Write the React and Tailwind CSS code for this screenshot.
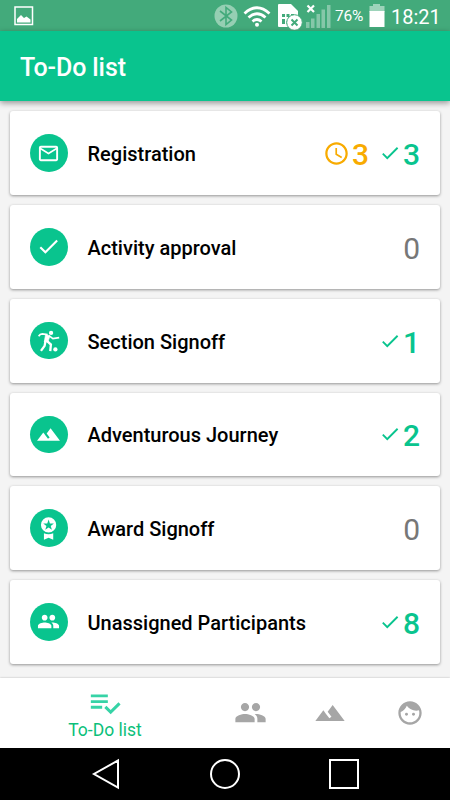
import React from 'react';
import { MdMailOutline, MdCheck, MdPeople, MdAccessTime } from 'react-icons/md';

function SoccerIcon() {
    return (
        <svg viewBox="0 0 113 113" className="w-[37.5px] h-[37.5px]" fill="none" stroke="currentColor">
            <circle cx="63.5" cy="33" r="6.5" fill="currentColor" stroke="none" />
            <circle cx="76.5" cy="82.5" r="6.5" fill="currentColor" stroke="none" />
            <path d="M26 43 Q30 36 37 36 L53 38" strokeWidth="5" />
            <path d="M57 41 L69 50 L88 47" strokeWidth="5" />
            <path d="M47 37 L60 42 L54 60 L43 60 Z" fill="currentColor" strokeWidth="2" />
            <path d="M47 56 L44 72 L33 87" strokeWidth="7" />
            <path d="M50 56 L63 68 L61 88" strokeWidth="7" />
        </svg>
    );
}

function AwardIcon() {
    return (
        <svg viewBox="0 0 113 113" className="w-[37.5px] h-[37.5px]" fill="currentColor">
            <path
                fillRule="evenodd"
                d="M56 25 A23 23 0 1 0 56 71 A23 23 0 1 0 56 25 Z M56 32 L60 43.5 L72 43.5 L62.5 51 L66 62.5 L56 55.5 L46 62.5 L49.5 51 L40 43.5 L52 43.5 Z"
            />
            <path d="M42 73 Q56 79 70 73 V93 L56 87 L42 93 Z" />
        </svg>
    );
}

function TerrainIcon({ size }) {
    return (
        <svg viewBox="0 0 24 24" width={size} height={size} fill="currentColor">
            <path d="M14 6l-3.750 5 2.850 3.800-1.600 1.200C9.810 13.750 7 10 7 10l-6 8h22L14 6z" />
        </svg>
    );
}

function FaceIcon({ size }) {
    return (
        <svg viewBox="0 0 24 24" width={size} height={size} fill="currentColor">
            <circle cx="9" cy="13" r="1.250" />
            <circle cx="15" cy="13" r="1.250" />
            <path d="M12 2C6.480 2 2 6.480 2 12s4.480 10 10 10 10-4.480 10-10S17.520 2 12 2zm0 18c-4.410 0-8-3.590-8-8 0-.290.020-.580.050-.860 2.360-1.050 4.230-2.980 5.210-5.370C11.070 8.330 14.050 10 17.420 10c.780 0 1.530-.090 2.250-.260.210.710.330 1.470.330 2.260 0 4.410-3.590 8-8 8z" />
        </svg>
    );
}

function ListCheckIcon({ size }) {
    return (
        <svg viewBox="0 0 24 24" width={size} height={size} fill="currentColor">
            <path d="M14 10H2v2h12v-2zm0-4H2v2h12V6zM2 16h8v-2H2v2zm19.500-4.500L23 13l-6.990 7-4.510-4.500L13 14l3.010 3 5.490-5.500z" />
        </svg>
    );
}

const items = [
    { title: 'Registration', icon: <MdMailOutline size={23} />, pending: 3, done: 3 },
    { title: 'Activity approval', icon: <MdCheck size={25} /> },
    { title: 'Section Signoff', icon: <SoccerIcon />, done: 1 },
    { title: 'Adventurous Journey', icon: <TerrainIcon size={25} />, done: 2 },
    { title: 'Award Signoff', icon: <AwardIcon /> },
    { title: 'Unassigned Participants', icon: <MdPeople size={23} />, done: 8 },
];

function StatusBar() {
    return (
        <div className="h-[31px] shrink-0 bg-[#43aa7b] flex items-center justify-between pl-[14px] pr-[9px] text-white">
            <svg width="20" height="20" viewBox="0 0 20 20">
                <rect x="1" y="1" width="17.5" height="17.5" fill="none" stroke="white" strokeWidth="1.5" />
                <path d="M3 16.5 V13 L7 9 L10 12 L12.5 10.5 L16.5 13.5 V16.5 Z" fill="white" />
            </svg>
            <div className="flex items-center">
                {/* Bluetooth */}
                <svg width="24" height="24" viewBox="0 0 24 24" fill="none">
                    <circle cx="12" cy="12" r="11.5" fill="#95cfb3" />
                    <path d="M6 7 L17.5 16 L12 20.5 V3.5 L17.5 8 L6 17" stroke="#43aa7b" strokeWidth="1.6" />
                </svg>
                {/* Wifi */}
                <svg className="ml-[5px]" width="28" height="24" viewBox="0 0 28 24" fill="none" stroke="white" strokeWidth="2.8">
                    <path d="M1.5 9.5 Q14 -2 26.5 9.5" />
                    <path d="M5.5 13.5 Q14 6 22.5 13.5" />
                    <path d="M9.5 17.5 Q14 13.5 18.5 17.5" />
                    <circle cx="14" cy="20.8" r="2" fill="white" stroke="none" />
                </svg>
                {/* Missing sim */}
                <svg className="ml-[6px]" width="26" height="28" viewBox="0 0 26 28">
                    <path d="M2 2 H14 L21 9 V25 H2 Q1 25 1 24 V3 Q1 2 2 2 Z" fill="white" />
                    <path d="M5 12 h3 v3 h-3 Z M9.5 12 h3 v3 h-3 Z M14 12 h3 v3 h-3 Z M5 17 h3 v5 h-3 Z M9.5 19 h3 v3 h-3 Z" fill="#43aa7b" />
                    <circle cx="17.5" cy="20.5" r="7.8" fill="white" stroke="#43aa7b" strokeWidth="1" />
                    <path d="M14.5 17.5 L20.5 23.5 M20.5 17.5 L14.5 23.5" stroke="#43aa7b" strokeWidth="2" />
                </svg>
                {/* Signal */}
                <svg className="ml-[2px]" width="27" height="26" viewBox="0 0 27 26">
                    <path d="M1 19 h3.5 v6 h-3.5 Z M6 15.5 h3.5 v9.5 h-3.5 Z M11.5 11 h3.5 v14 h-3.5 Z M16.5 6.5 h3.5 v18.5 h-3.5 Z M22 2 h3.5 v23 h-3.5 Z" fill="#86c7a9" />
                    <path d="M2.5 2.5 L9 9 M9 2.5 L2.5 9" stroke="white" strokeWidth="2.2" />
                </svg>
                <span className="ml-[3px] mt-0.5 w-[31px] text-[15.5px] tracking-[-0.2px] leading-none whitespace-nowrap">76%</span>
                {/* Battery */}
                <svg className="ml-[3px]" width="16" height="24" viewBox="0 0 16 24">
                    <path d="M4 0 h7 v2 h4.5 v6 H0.5 V2 H4 Z" fill="#9dd3ba" />
                    <rect x="0.500" y="7" width="15" height="16" fill="white" />
                </svg>
                <span className="ml-[6px] mt-0.5 w-[50px] text-[20px] leading-none whitespace-nowrap">18:21</span>
            </div>
        </div>
    );
}

function TodoCard({ item }) {
    return (
        <div className="h-[83.75px] shrink-0 bg-white rounded-[3px] shadow-[0_1px_3px_rgba(0,0,0,0.4)] flex items-center pl-5 pr-5">
            <div className="w-[37.5px] h-[37.5px] rounded-full bg-[#09c48e] text-white flex items-center justify-center">
                {item.icon}
            </div>
            <h2 className="ml-5 pt-0.5 text-[20px] font-medium leading-6 text-black">{item.title}</h2>
            <div className="ml-auto flex items-center text-[30px] leading-8">
                {item.pending && (
                    <div className="flex items-center mr-2.5 text-[#f8ab00]">
                        <MdAccessTime size={27} className="mr-[2px]" />
                        <span className="pt-1 font-medium">{item.pending}</span>
                    </div>
                )}
                {item.done ? (
                    <div className="flex items-center text-[#09c48e]">
                        <MdCheck size={22} className="mr-[2px]" />
                        <span className="pt-1 font-medium">{item.done}</span>
                    </div>
                ) : (
                    <span className="pt-1 text-[#777]">0</span>
                )}
            </div>
        </div>
    );
}

function TabBar() {
    return (
        <nav className="h-[70px] shrink-0 bg-white shadow-[0_0_2px_rgba(0,0,0,0.25)] flex items-center text-[#a6a6a6]">
            <div className="w-[210px] flex flex-col items-center">
                <div className="text-[#36d3a6]">
                    <ListCheckIcon size={34} />
                </div>
                <span className="text-[17.5px] leading-5 text-[#0bbf7a]">To-Do list</span>
            </div>
            <div className="w-20 flex justify-center">
                <MdPeople size={33} />
            </div>
            <div className="w-20 flex justify-center">
                <TerrainIcon size={32} />
            </div>
            <div className="w-20 flex justify-center">
                <FaceIcon size={28} />
            </div>
        </nav>
    );
}

export default function App() {
    return (
        <div className="w-[450px] h-[800px] overflow-hidden flex flex-col bg-[#f4f4f4] font-['Roboto',sans-serif]">
            <StatusBar />
            <header className="h-[70px] shrink-0 bg-[#09c48e] shadow-[0_2px_6px_rgba(0,0,0,0.4)] flex items-center pl-5 pt-0.5">
                <h1 className="text-[25px] tracking-[-0.1px] font-medium leading-none text-white">To-Do list</h1>
            </header>
            <main className="flex-1 min-h-0 px-2.5 pt-[10.3px] flex flex-col gap-2.5">
                {items.map((item) => (
                    <TodoCard key={item.title} item={item} />
                ))}
            </main>
            <TabBar />
            {/* Android navigation keys */}
            <div className="h-[52.5px] shrink-0 bg-black flex items-center">
                <svg width="450" height="52" viewBox="0 0 450 52" fill="none" stroke="white" strokeWidth="2">
                    <path d="M118 12.5 V39.5 L94 26 Z" />
                    <circle cx="225" cy="26" r="14" />
                    <rect x="330" y="12" width="28" height="28" />
                </svg>
            </div>
        </div>
    );
}
